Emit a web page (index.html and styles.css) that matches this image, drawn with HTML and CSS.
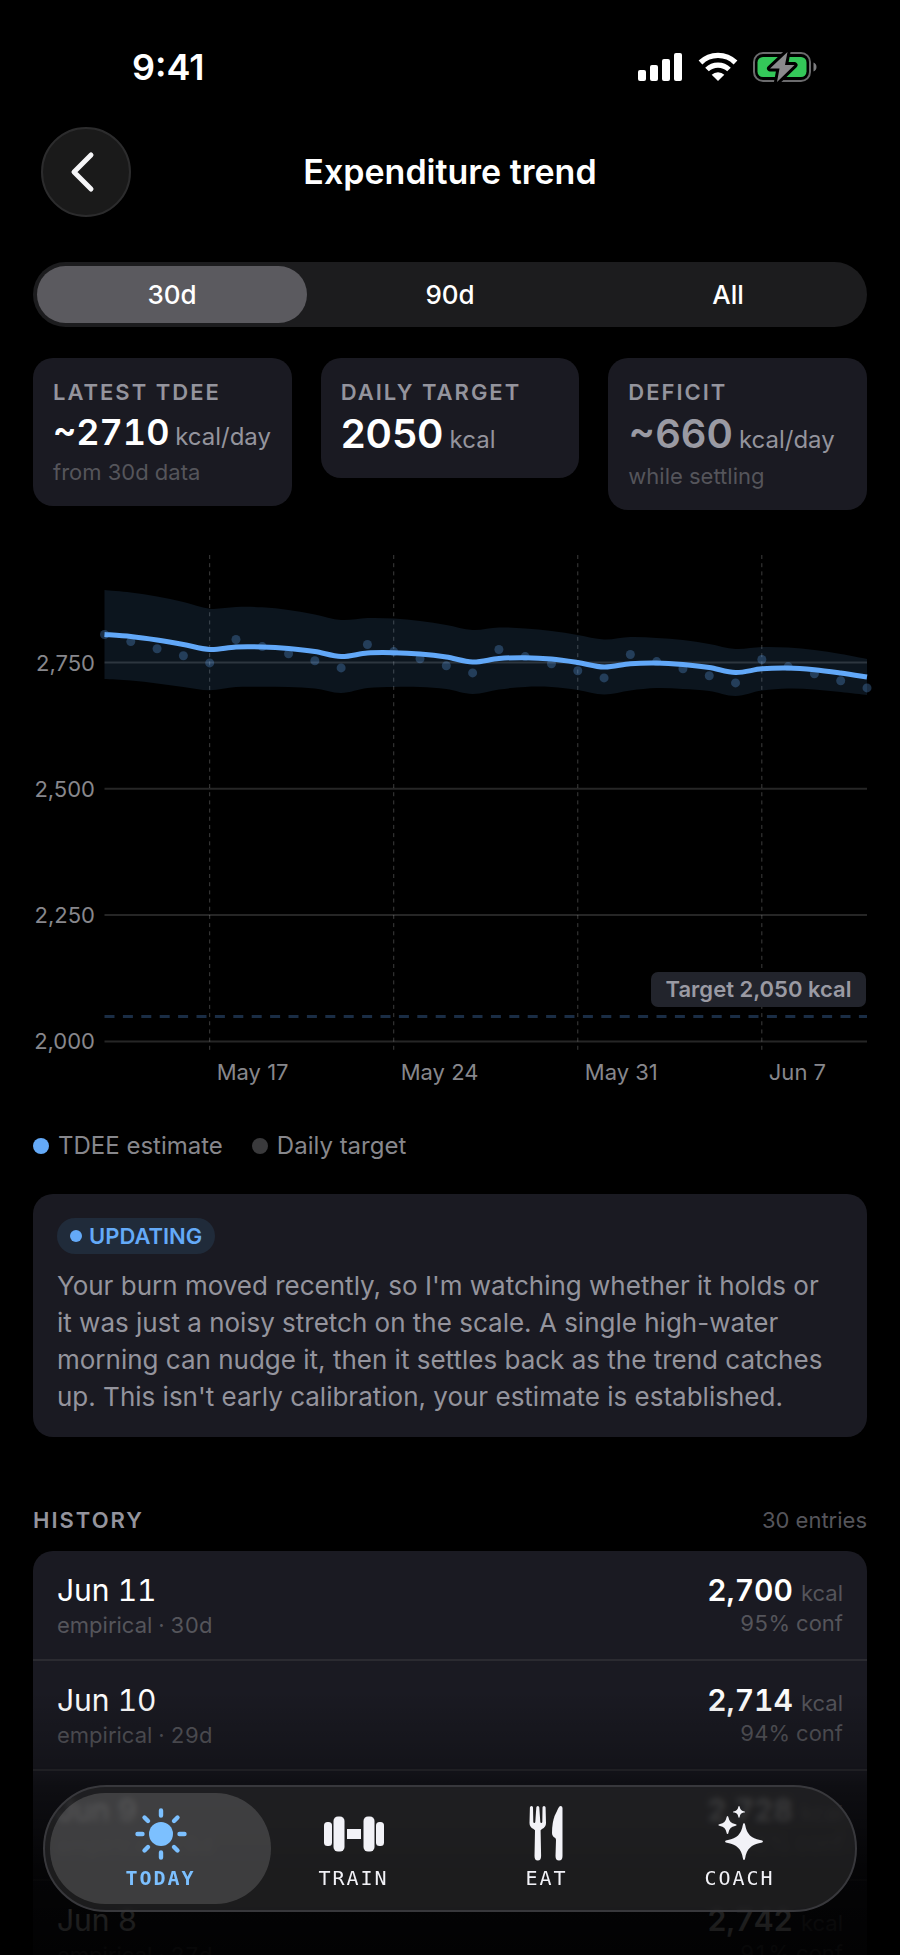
FILE: index.html
```html
<!DOCTYPE html>
<html lang="en">
<head>
    <meta charset="UTF-8">
    <meta name="viewport" content="width=device-width, initial-scale=1.0">
    <title>Expenditure trend</title>
    <link rel="stylesheet" href="styles.css">
</head>
<body>

<div class="screen">
    <div class="scroll">
        <div class="status-bar">
            <span class="time">9:41</span>
            <div class="status-icons">
                <svg width="45" height="30" viewBox="0 0 45 30" fill="#fff">
                    <rect x="0" y="18" width="8" height="11" rx="2"/>
                    <rect x="12" y="13" width="8" height="16" rx="2"/>
                    <rect x="24" y="7" width="8" height="22" rx="2"/>
                    <rect x="36" y="1" width="8" height="28" rx="2"/>
                </svg>
                <svg width="40" height="30" viewBox="0 0 40 30">
                    <path d="M2.5 10.5a25 25 0 0 1 35 0" fill="none" stroke="#fff" stroke-width="5.4"/>
                    <path d="M9 17.5a15.8 15.8 0 0 1 22 0" fill="none" stroke="#fff" stroke-width="5.2"/>
                    <path d="M20 29l-6.3-6.2a9 9 0 0 1 12.6 0z" fill="#fff"/>
                </svg>
                <svg width="65" height="32" viewBox="0 0 65 32">
                    <rect x="1" y="2" width="56" height="28" rx="9" fill="none" stroke="#6b6b6d" stroke-width="2"/>
                    <path d="M60.5 11.5c4 1.5 4 7.5 0 9z" fill="#7c7c7e"/>
                    <rect x="4.5" y="6" width="49" height="20" rx="5.5" fill="#34c759"/>
                    <path d="M34.5 1L17 17.5h9.5L24 31l17.5-17H32z" fill="#8a8a8c" stroke="#000" stroke-width="6" stroke-linejoin="round" paint-order="stroke"/>
                </svg>
            </div>
        </div>

        <header class="nav-bar">
            <button class="back" aria-label="Back">
                <svg width="26" height="42" viewBox="0 0 26 42">
                    <path d="M22 4L5 21l17 17" fill="none" stroke="#f5f5f7" stroke-width="5" stroke-linecap="round" stroke-linejoin="round"/>
                </svg>
            </button>
            <h1 class="title">Expenditure trend</h1>
        </header>

        <main class="content">
            <div class="segmented">
                <button class="segment active">30d</button>
                <button class="segment">90d</button>
                <button class="segment">All</button>
            </div>

            <section class="stats">
                <div class="stat">
                    <div class="label">Latest TDEE</div>
                    <div class="value">~2710 <span class="unit">kcal/day</span></div>
                    <div class="note">from 30d data</div>
                </div>
                <div class="stat">
                    <div class="label">Daily target</div>
                    <div class="value large">2050 <span class="unit">kcal</span></div>
                </div>
                <div class="stat">
                    <div class="label">Deficit</div>
                    <div class="value large muted">~660 <span class="unit">kcal/day</span></div>
                    <div class="note">while settling</div>
                </div>
            </section>

            <svg class="chart" id="chart" viewBox="0 0 834 550" role="img" aria-label="TDEE estimate over the last 30 days"></svg>

            <div class="legend">
                <span class="legend-item"><i class="dot"></i>TDEE estimate</span>
                <span class="legend-item"><i class="dot gray"></i>Daily target</span>
            </div>

            <section class="insight">
                <span class="pill"><i class="pill-dot"></i>UPDATING</span>
                <p class="insight-text">Your burn moved recently, so I'm watching whether it holds or it was just a noisy stretch on the scale. A single high-water morning can nudge it, then it settles back as the trend catches up. This isn't early calibration, your estimate is established.</p>
            </section>

            <div class="history-head">
                <h2 class="label">History</h2>
                <span class="note">30 entries</span>
            </div>

            <ul class="history">
                <li class="entry">
                    <div>
                        <div class="date">Jun 11</div>
                        <div class="note source">empirical · 30d</div>
                    </div>
                    <div class="right">
                        <div class="amount">2,700 <span class="note">kcal</span></div>
                        <div class="note">95% conf</div>
                    </div>
                </li>
                <li class="entry">
                    <div>
                        <div class="date">Jun 10</div>
                        <div class="note source">empirical · 29d</div>
                    </div>
                    <div class="right">
                        <div class="amount">2,714 <span class="note">kcal</span></div>
                        <div class="note">94% conf</div>
                    </div>
                </li>
                <li class="entry">
                    <div>
                        <div class="date">Jun 9</div>
                        <div class="note source">empirical · 28d</div>
                    </div>
                    <div class="right">
                        <div class="amount">2,728 <span class="note">kcal</span></div>
                        <div class="note">92% conf</div>
                    </div>
                </li>
                <li class="entry">
                    <div>
                        <div class="date">Jun 8</div>
                        <div class="note source">empirical · 27d</div>
                    </div>
                    <div class="right">
                        <div class="amount">2,742 <span class="note">kcal</span></div>
                        <div class="note">91% conf</div>
                    </div>
                </li>
            </ul>
        </main>
    </div>

    <div class="fade"></div>

    <nav class="tab-bar">
        <button class="tab active">
            <svg width="60" height="60" viewBox="0 0 60 60" fill="#7cc0ff">
                <circle cx="30" cy="30" r="12"/>
                <path d="M30 6.500v5M30 48.500v5M6.500 30h5M48.500 30h5M13.500 13.500l3.500 3.500M43 43l3.500 3.500M13.500 46.500l3.500-3.500M43 17l3.500-3.500" stroke="#7cc0ff" stroke-width="4.400" stroke-linecap="round"/>
            </svg>
            <span>TODAY</span>
        </button>
        <button class="tab">
            <svg width="60" height="60" viewBox="0 0 60 60" fill="#f2f2f7">
                <rect x="0" y="18" width="8" height="24" rx="3.5"/>
                <rect x="9.5" y="12.5" width="11" height="35" rx="4.5"/>
                <rect x="23" y="25" width="14" height="10"/>
                <rect x="39.5" y="12.5" width="11" height="35" rx="4.5"/>
                <rect x="52" y="18" width="8" height="24" rx="3.5"/>
            </svg>
            <span>TRAIN</span>
        </button>
        <button class="tab">
            <svg width="60" height="60" viewBox="0 0 60 60" fill="#f2f2f7">
                <path d="M14.500 2q-1.500 0-1.600 1.500L12.500 19q0 4 4 6l1.500 1.200L17.500 52q0 4.500 3.300 4.500t3.300-4.500L23.600 26.200 25 25q4-2 4-6L28.600 3.500Q28.500 2 27 2t-1.500 1.500L25.300 18q-.1 1-1 1t-1-1L22.300 3.500Q22.200 2 20.800 2t-1.500 1.500L18.300 18q-.1 1-1 1t-1-1L16 3.500Q16 2 14.500 2z"/>
                <path d="M43.500 2q2 0 2 2v48q0 4.500-3.500 4.500t-3.500-4.500l.5-16q0-1.500-1-2.200-3-1.500-3-4.800 0-14 5-22Q42 2 43.500 2z"/>
            </svg>
            <span>EAT</span>
        </button>
        <button class="tab">
            <svg width="60" height="60" viewBox="0 0 60 60" fill="#f2f2f7">
                <path d="M34 19q1 0 1.300 2.500Q37.300 34 50 36q3 .4 3 1.500T50 39q-12.700 2-14.700 14.500Q35 56 34 56t-1.300-2.500Q30.700 41 18 39q-3-.4-3-1.500t3-1.500q12.700-2 14.700-14.500Q33 19 34 19z"/>
                <path d="M17.500 12q.8 0 1 1.500 1 5.600 6.500 6.500 1.700.3 1.700 1T25 22q-5.500.9-6.500 6.500-.2 1.500-1 1.500t-1-1.500q-1-5.600-6.500-6.500-1.700-.3-1.700-1T10 20q5.500-.9 6.500-6.500.2-1.500 1-1.500z"/>
                <path d="M29 2q.6 0 .7 1 .6 3.600 4 4.200 1.300.2 1.300.7t-1.300.7q-3.400.6-4 4.200-.1 1-.7 1t-.7-1q-.6-3.600-4-4.200-1.300-.2-1.300-.7t1.300-.7q3.400-.6 4-4.200.1-1 .7-1z"/>
            </svg>
            <span>COACH</span>
        </button>
    </nav>
</div>

<script src="chart.js"></script>

</body>
</html>
```

FILE: styles.css
```css
* {
    box-sizing: border-box;
}

body {
    margin: 0;
    background-color: #000;
    color: #fff;
    font-family: Inter, "Liberation Sans", sans-serif;
}

button {
    border: none;
    padding: 0;
    background: none;
    color: inherit;
    font: inherit;
    cursor: pointer;
}

svg {
    display: block;
}

h1, h2, p, ul {
    margin: 0;
    padding: 0;
}

.screen {
    position: relative;
    height: 100vh;
    overflow: hidden;
}

.scroll {
    height: 100%;
    overflow-y: auto;
    scrollbar-width: none;
}

/* Status bar */
.status-bar {
    display: flex;
    justify-content: space-between;
    align-items: center;
    padding: 44px 82px 0 132px;
}

.time {
    font-size: 36px;
    font-weight: 600;
    line-height: 46px;
}

.status-icons {
    display: flex;
    align-items: center;
    gap: 15px;
}

/* Header */
.nav-bar {
    display: grid;
    grid-template-columns: 90px 1fr 90px;
    align-items: center;
    margin-top: 37px;
    padding: 0 41px;
}

.back {
    display: flex;
    justify-content: center;
    align-items: center;
    height: 90px;
    padding-right: 8px;
    border: 2px solid #2c2c2d;
    border-radius: 50%;
    background-color: #1a1a1a;
}

.title {
    font-size: 34px;
    font-weight: 600;
    line-height: 44px;
    text-align: center;
}

.content {
    padding: 45px 33px 0;
}

/* Range picker */
.segmented {
    display: flex;
    border-radius: 33px;
    background-color: #1c1c1e;
}

.segment {
    flex: 1;
    margin: 4px;
    border-radius: 29px;
    font-size: 26px;
    font-weight: 500;
    line-height: 57px;
}

.segment.active {
    background-color: #5b5a5f;
}

/* Stat cards */
.stats {
    display: grid;
    grid-template-columns: repeat(3, 1fr);
    align-items: start;
    gap: 29px;
    margin-top: 31px;
}

.stat {
    padding: 20px;
    border-radius: 20px;
    background-color: #1a1a22;
    white-space: nowrap;
}

.label {
    color: #94949d;
    font-size: 22px;
    font-weight: 600;
    line-height: 28px;
    letter-spacing: 2px;
    text-transform: uppercase;
}

.value {
    margin: 4px 0;
    font-size: 36px;
    font-weight: 600;
    font-variant-numeric: tabular-nums;
    line-height: 44px;
}

.value.large {
    font-size: 40px;
    font-variant-numeric: normal;
    line-height: 48px;
}

.stat:nth-child(2) .value {
    margin-bottom: 0;
}

.value.muted {
    color: #9a9aa3;
}

.unit {
    margin-left: -4px;
    color: #94949d;
    font-size: 24px;
    font-weight: 400;
    line-height: 24px;
}

.note {
    color: #55555b;
    font-size: 22px;
    font-weight: 400;
    line-height: 28px;
}

/* Chart */
.chart {
    width: 100%;
    height: auto;
    margin-top: 35px;
    overflow: visible;
    font-size: 22px;
}

.grid-line {
    stroke: #fff;
    stroke-opacity: 0.15;
    stroke-width: 2;
}

.grid-line.vertical {
    stroke-opacity: 0.24;
    stroke-width: 1;
    stroke-dasharray: 4 4.18;
}

.axis-text {
    fill: #87878c;
}

.band {
    fill: #64aaf8;
    fill-opacity: 0.12;
}

.estimate {
    fill: none;
    stroke: #62a8f8;
    stroke-width: 5;
}

.weigh-in {
    fill: #64aaf8;
    fill-opacity: 0.28;
}

.target-line {
    stroke: #1a2d45;
    stroke-width: 3;
    stroke-dasharray: 10 8.4;
}

.target-box {
    fill: #22242c;
}

.target-text {
    fill: #9a9aa3;
    font-weight: 600;
}

.legend {
    display: flex;
    gap: 29px;
    margin-top: 35px;
}

.legend-item {
    display: flex;
    align-items: center;
    gap: 9px;
    color: #87878c;
    font-size: 24px;
    line-height: 32px;
}

.dot {
    width: 16px;
    height: 16px;
    border-radius: 50%;
    background-color: #64aaf8;
}

.dot.gray {
    background-color: #3a3a3c;
}

/* Insight */
.insight {
    margin-top: 32px;
    padding: 24px 40px 22px 24px;
    border-radius: 20px;
    background-color: #1a1a22;
}

.pill {
    display: inline-flex;
    align-items: center;
    gap: 7px;
    padding: 0 13px;
    border-radius: 18px;
    background-color: #202b3a;
    color: #64aaf8;
    font-size: 22px;
    font-weight: 600;
    line-height: 36px;
    vertical-align: top;
}

.pill-dot {
    width: 12px;
    height: 12px;
    border-radius: 50%;
    background-color: #64aaf8;
}

.insight-text {
    margin-top: 13px;
    color: #94949d;
    font-size: 26px;
    line-height: 37px;
}

/* History */
.history-head {
    display: flex;
    justify-content: space-between;
    margin-top: 69px;
}

.history {
    margin-top: 17px;
    border-radius: 20px 20px 0 0;
    background-color: #1a1a22;
    list-style: none;
    font-variant-numeric: tabular-nums;
}

.entry {
    display: flex;
    justify-content: space-between;
    padding: 20px 24px;
    border-bottom: 2px solid #2b2b31;
}

.date {
    font-size: 30px;
    line-height: 38px;
}

.source {
    margin-top: 2px;
}

.right {
    text-align: right;
}

.amount {
    font-size: 30px;
    font-weight: 600;
    line-height: 38px;
}

.fade {
    position: absolute;
    left: 0;
    right: 0;
    bottom: 0;
    height: 265px;
    background: linear-gradient(rgba(0, 0, 0, 0), rgba(0, 0, 0, 0.25) 29%, rgba(0, 0, 0, 0.45) 36%, rgba(0, 0, 0, 0.82) 68%, rgba(0, 0, 0, 0.92));
    pointer-events: none;
}

/* Tab bar */
.tab-bar {
    position: absolute;
    left: 43px;
    right: 43px;
    bottom: 43px;
    display: flex;
    padding: 6px 19px;
    border: 2px solid #38383c;
    border-radius: 64px;
    background-color: rgba(38, 38, 40, 0.7);
    backdrop-filter: blur(3px);
}

.tab {
    position: relative;
    display: flex;
    flex: 1;
    flex-direction: column;
    align-items: center;
    padding: 11px 0 12px;
    color: #f2f2f7;
    font-family: "DejaVu Sans Mono", monospace;
    font-size: 20px;
    line-height: 28px;
    letter-spacing: 2px;
}

.tab.active {
    color: #7cc0ff;
    font-weight: 700;
}

.tab.active::before {
    content: "";
    position: absolute;
    inset: 0 -14px;
    border-radius: 56px;
    background-color: rgba(255, 255, 255, 0.15);
}

.tab svg,
.tab span {
    position: relative;
}
```

FILE: chart.js
```javascript
const chart = document.getElementById('chart');

const startX = 71.5;
const endX = 834;
const dayWidth = (endX - startX) / 29;

// y positions, one entry per day starting May 13
const estimate = [89.5, 91.5, 95, 99.5, 104.5, 102, 102, 103.5, 106.5, 111.5, 108, 107.7, 109, 112, 117, 113.5, 112.7, 114, 117.5, 122, 118.7, 118, 119.5, 122.5, 127.5, 123.8, 123, 124.7, 128, 132];
const upper = [45, 47.5, 51.5, 57, 63.7, 62, 62.3, 65, 69.5, 75, 73, 73.5, 76, 80, 85, 82.5, 83.5, 86, 90, 94.5, 92, 93, 95, 99, 104, 102, 102.5, 105, 109, 114];
const lower = estimate.map((y, i) => 2 * y - upper[i]);

function dayX(day) {
    return startX + day * dayWidth;
}

function add(tag, className, attrs, text) {
    const el = document.createElementNS('http://www.w3.org/2000/svg', tag);
    el.setAttribute('class', className);
    for (const key in attrs) {
        el.setAttribute(key, attrs[key]);
    }
    if (text) el.textContent = text;
    chart.appendChild(el);
}

// Catmull-Rom spline through the points
function curve(points) {
    let d = '';
    for (let i = 0; i < points.length - 1; i++) {
        const p0 = points[i - 1] || points[i];
        const p1 = points[i];
        const p2 = points[i + 1];
        const p3 = points[i + 2] || p2;
        d += ` C${p1[0] + (p2[0] - p0[0]) / 6} ${p1[1] + (p2[1] - p0[1]) / 6}`;
        d += ` ${p2[0] - (p3[0] - p1[0]) / 6} ${p2[1] - (p3[1] - p1[1]) / 6} ${p2[0]} ${p2[1]}`;
    }
    return d;
}

function toPoints(values) {
    return values.map((y, i) => [dayX(i), y]);
}

['2,750', '2,500', '2,250', '2,000'].forEach((text, i) => {
    const y = 117.5 + i * 126.3;
    add('line', 'grid-line', { x1: startX, x2: endX, y1: y, y2: y });
    add('text', 'axis-text', { x: 62, y: y + 8, 'text-anchor': 'end' }, text);
});

['May 17', 'May 24', 'May 31', 'Jun 7'].forEach((text, i) => {
    const x = dayX(4 + i * 7);
    add('line', 'grid-line vertical', { x1: x, x2: x, y1: 10, y2: 506 });
    add('text', 'axis-text', { x: x + 7, y: 535 }, text);
});

const upperPoints = toPoints(upper);
const lowerPoints = toPoints(lower).reverse();
add('path', 'band', { d: `M${upperPoints[0]}${curve(upperPoints)} L${lowerPoints[0]}${curve(lowerPoints)} Z` });

// readings drop by 7 a day and jump back up every fifth day
for (let day = 0; day < 30; day++) {
    const y = day < 5 ? 89.5 + day * 7.1 : 94.5 + (day % 5) * 7.1 + (Math.floor(day / 5) - 1) * 5;
    add('circle', 'weigh-in', { cx: dayX(day), cy: y, r: 4.5 });
}

const line = toPoints(estimate);
add('path', 'estimate', { d: `M${line[0]}${curve(line)}` });

add('line', 'target-line', { x1: startX, x2: endX, y1: 471.5, y2: 471.5 });
add('rect', 'target-box', { x: 618, y: 427, width: 215, height: 35, rx: 7 });
add('text', 'target-text', { x: 725.5, y: 452, 'text-anchor': 'middle' }, 'Target 2,050 kcal');
```
